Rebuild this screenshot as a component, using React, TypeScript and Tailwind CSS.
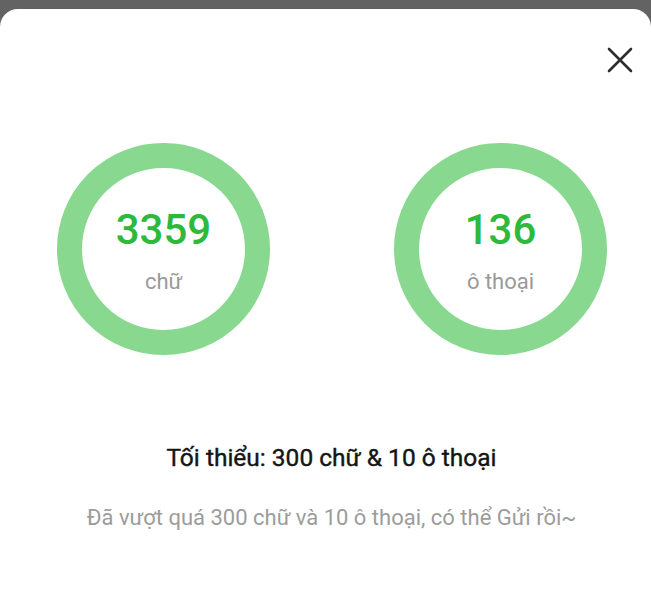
const stats = [
  { value: "3359", label: "chữ" },
  { value: "136", label: "ô thoại" },
];

const App = () => {
  return (
    <div className="w-[651px] h-[600px] bg-[#636363] pt-[9px] overflow-hidden font-['Roboto',_'Noto_Sans',_sans-serif]">
      <div className="relative h-full bg-white rounded-t-[18px]">
        <button className="absolute right-[16px] top-[36px] w-[30px] h-[30px] flex items-center justify-center text-[#2e2e2e]">
          <svg width="26" height="26" viewBox="0 0 26 26" fill="none">
            <path d="M2 2L24 24M24 2L2 24" stroke="currentColor" strokeWidth="2.6" strokeLinecap="round" />
          </svg>
        </button>
        <div className="flex pl-[57px] pt-[134px] gap-[124px]">
          {stats.map((s) => (
            <div
              key={s.label}
              className="w-[213px] h-[212px] rounded-full border-[25px] border-[#88d98f] flex flex-col items-center justify-center"
            >
              <span className="text-[42px] leading-none font-medium text-[#2cb93c] mt-[4px]">{s.value}</span>
              <span className="text-[22px] leading-none text-[#9a9a9a] mt-[20px]">{s.label}</span>
            </div>
          ))}
        </div>
        <div className="pl-[12px] text-center">
          <p className="mt-[91px] text-[24.5px] leading-none text-[#151515] [-webkit-text-stroke:0.4px_#151515]">
            Tối thiểu: 300 chữ &amp; 10 ô thoại
          </p>
          <p className="mt-[36px] text-[22px] leading-none text-[#9c9c9c]">
            Đã vượt quá 300 chữ và 10 ô thoại, có thể Gửi rồi~
          </p>
        </div>
      </div>
    </div>
  );
};

export default App;
